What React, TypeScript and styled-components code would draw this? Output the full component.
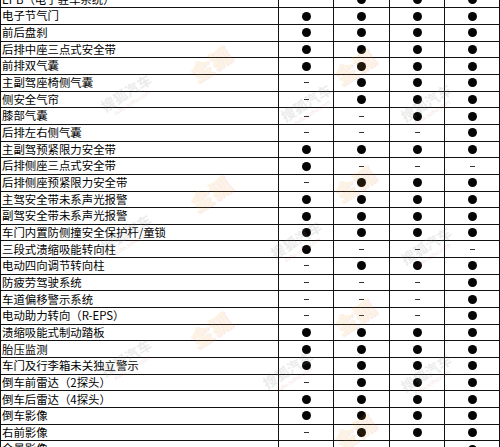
import React from "react";
import styled, { createGlobalStyle } from "styled-components";

const GlobalStyle = createGlobalStyle`
  html, body {
    margin: 0;
    padding: 0;
    background: #ffffff;
  }
  body {
    font-family: "Noto Sans CJK SC", "Noto Sans", sans-serif;
  }
`;

const Page = styled.div`
  position: relative;
  width: 500px;
  height: 447px;
  overflow: hidden;
  background: #ffffff;
`;

const Table = styled.div`
  display: grid;
  grid-template-columns: 278px 55px 56px 55px 55px;
  grid-auto-rows: 16.667px;
  margin-top: -8.37px;
  border-left: 1px solid #111;
  width: 500px;
  box-sizing: border-box;
`;

const Cell = styled.div`
  box-sizing: border-box;
  border-right: 1px solid #111;
  border-bottom: 1px solid #111;
  display: flex;
  align-items: center;
`;

const Label = styled(Cell)`
  padding-left: 1px;
  font-size: 11.4px;
  line-height: 1;
  color: #000;
  white-space: nowrap;
  overflow: hidden;
`;

const Mark = styled(Cell)`
  justify-content: center;
`;

const Dot = styled.span`
  width: 9px;
  height: 9px;
  border-radius: 50%;
  background: #050505;
`;

const Dash = styled.span`
  width: 5px;
  height: 1px;
  background: #333;
`;

const Overlay = styled.div`
  position: absolute;
  inset: 0;
  pointer-events: none;
`;

const GrayMark = styled.div<{ $x: number; $y: number }>`
  position: absolute;
  left: ${(p) => p.$x}px;
  top: ${(p) => p.$y}px;
  transform: rotate(-32deg);
  color: #8a8a8a;
  opacity: 0.16;
  font-size: 14px;
  font-weight: 700;
  line-height: 1;
  text-align: center;
  span {
    display: block;
    font-size: 6px;
    font-weight: 400;
    margin-top: 2px;
    color: #c05050;
  }
`;

const OrangeMark = styled.div<{ $x: number; $y: number }>`
  position: absolute;
  left: ${(p) => p.$x}px;
  top: ${(p) => p.$y}px;
  transform: rotate(-32deg);
  font-size: 22px;
  font-weight: 900;
  line-height: 1;
  color: #f0a030;
  opacity: 0.12;
  text-shadow: 1px 1px 0 #e05050;
`;

const rows: [string, string][] = [
  ["EPB（电子驻车系统）", "-ooo"],
  ["电子节气门", "oooo"],
  ["前后盘刹", "oooo"],
  ["后排中座三点式安全带", "oooo"],
  ["前排双气囊", "oooo"],
  ["主副驾座椅侧气囊", "-ooo"],
  ["侧安全气帘", "-ooo"],
  ["膝部气囊", "--oo"],
  ["后排左右侧气囊", "---o"],
  ["主副驾预紧限力安全带", "oooo"],
  ["后排侧座三点式安全带", "o---"],
  ["后排侧座预紧限力安全带", "-ooo"],
  ["主驾安全带未系声光报警", "oooo"],
  ["副驾安全带未系声光报警", "oooo"],
  ["车门内置防侧撞安全保护杆/童锁", "oooo"],
  ["三段式溃缩吸能转向柱", "o---"],
  ["电动四向调节转向柱", "-ooo"],
  ["防疲劳驾驶系统", "---o"],
  ["车道偏移警示系统", "---o"],
  ["电动助力转向（R-EPS）", "---o"],
  ["溃缩吸能式制动踏板", "oooo"],
  ["胎压监测", "oooo"],
  ["车门及行李箱未关独立警示", "oooo"],
  ["倒车前雷达（2探头）", "-ooo"],
  ["倒车后雷达（4探头）", "oooo"],
  ["倒车影像", "oooo"],
  ["右前影像", "-ooo"],
  ["全景影像", "---o"],
];

const grayMarks = [
  { x: 100, y: 85 },
  { x: 280, y: 95 },
  { x: 400, y: 95 },
  { x: 100, y: 225 },
  { x: 270, y: 232 },
  { x: 400, y: 238 },
  { x: 100, y: 350 },
  { x: 262, y: 362 },
  { x: 400, y: 365 },
];

const orangeMarks = [
  { x: 188, y: 52 },
  { x: 332, y: 55 },
  { x: 188, y: 182 },
  { x: 332, y: 172 },
  { x: 188, y: 318 },
  { x: 332, y: 305 },
  { x: 332, y: 420 },
];

export default function App() {
  return (
    <Page>
      <GlobalStyle />
      <Table>
        {rows.map(([name, marks], i) => (
          <React.Fragment key={i}>
            <Label>{name}</Label>
            {marks.split("").map((m, j) => (
              <Mark key={j}>{m === "o" ? <Dot /> : <Dash />}</Mark>
            ))}
          </React.Fragment>
        ))}
      </Table>
      <Overlay>
        {grayMarks.map((g, i) => (
          <GrayMark key={i} $x={g.x} $y={g.y}>
            搜狐汽车
            <span>auto.sohu.com</span>
          </GrayMark>
        ))}
        {orangeMarks.map((o, i) => (
          <OrangeMark key={i} $x={o.x} $y={o.y}>
            金狐
          </OrangeMark>
        ))}
      </Overlay>
    </Page>
  );
}
